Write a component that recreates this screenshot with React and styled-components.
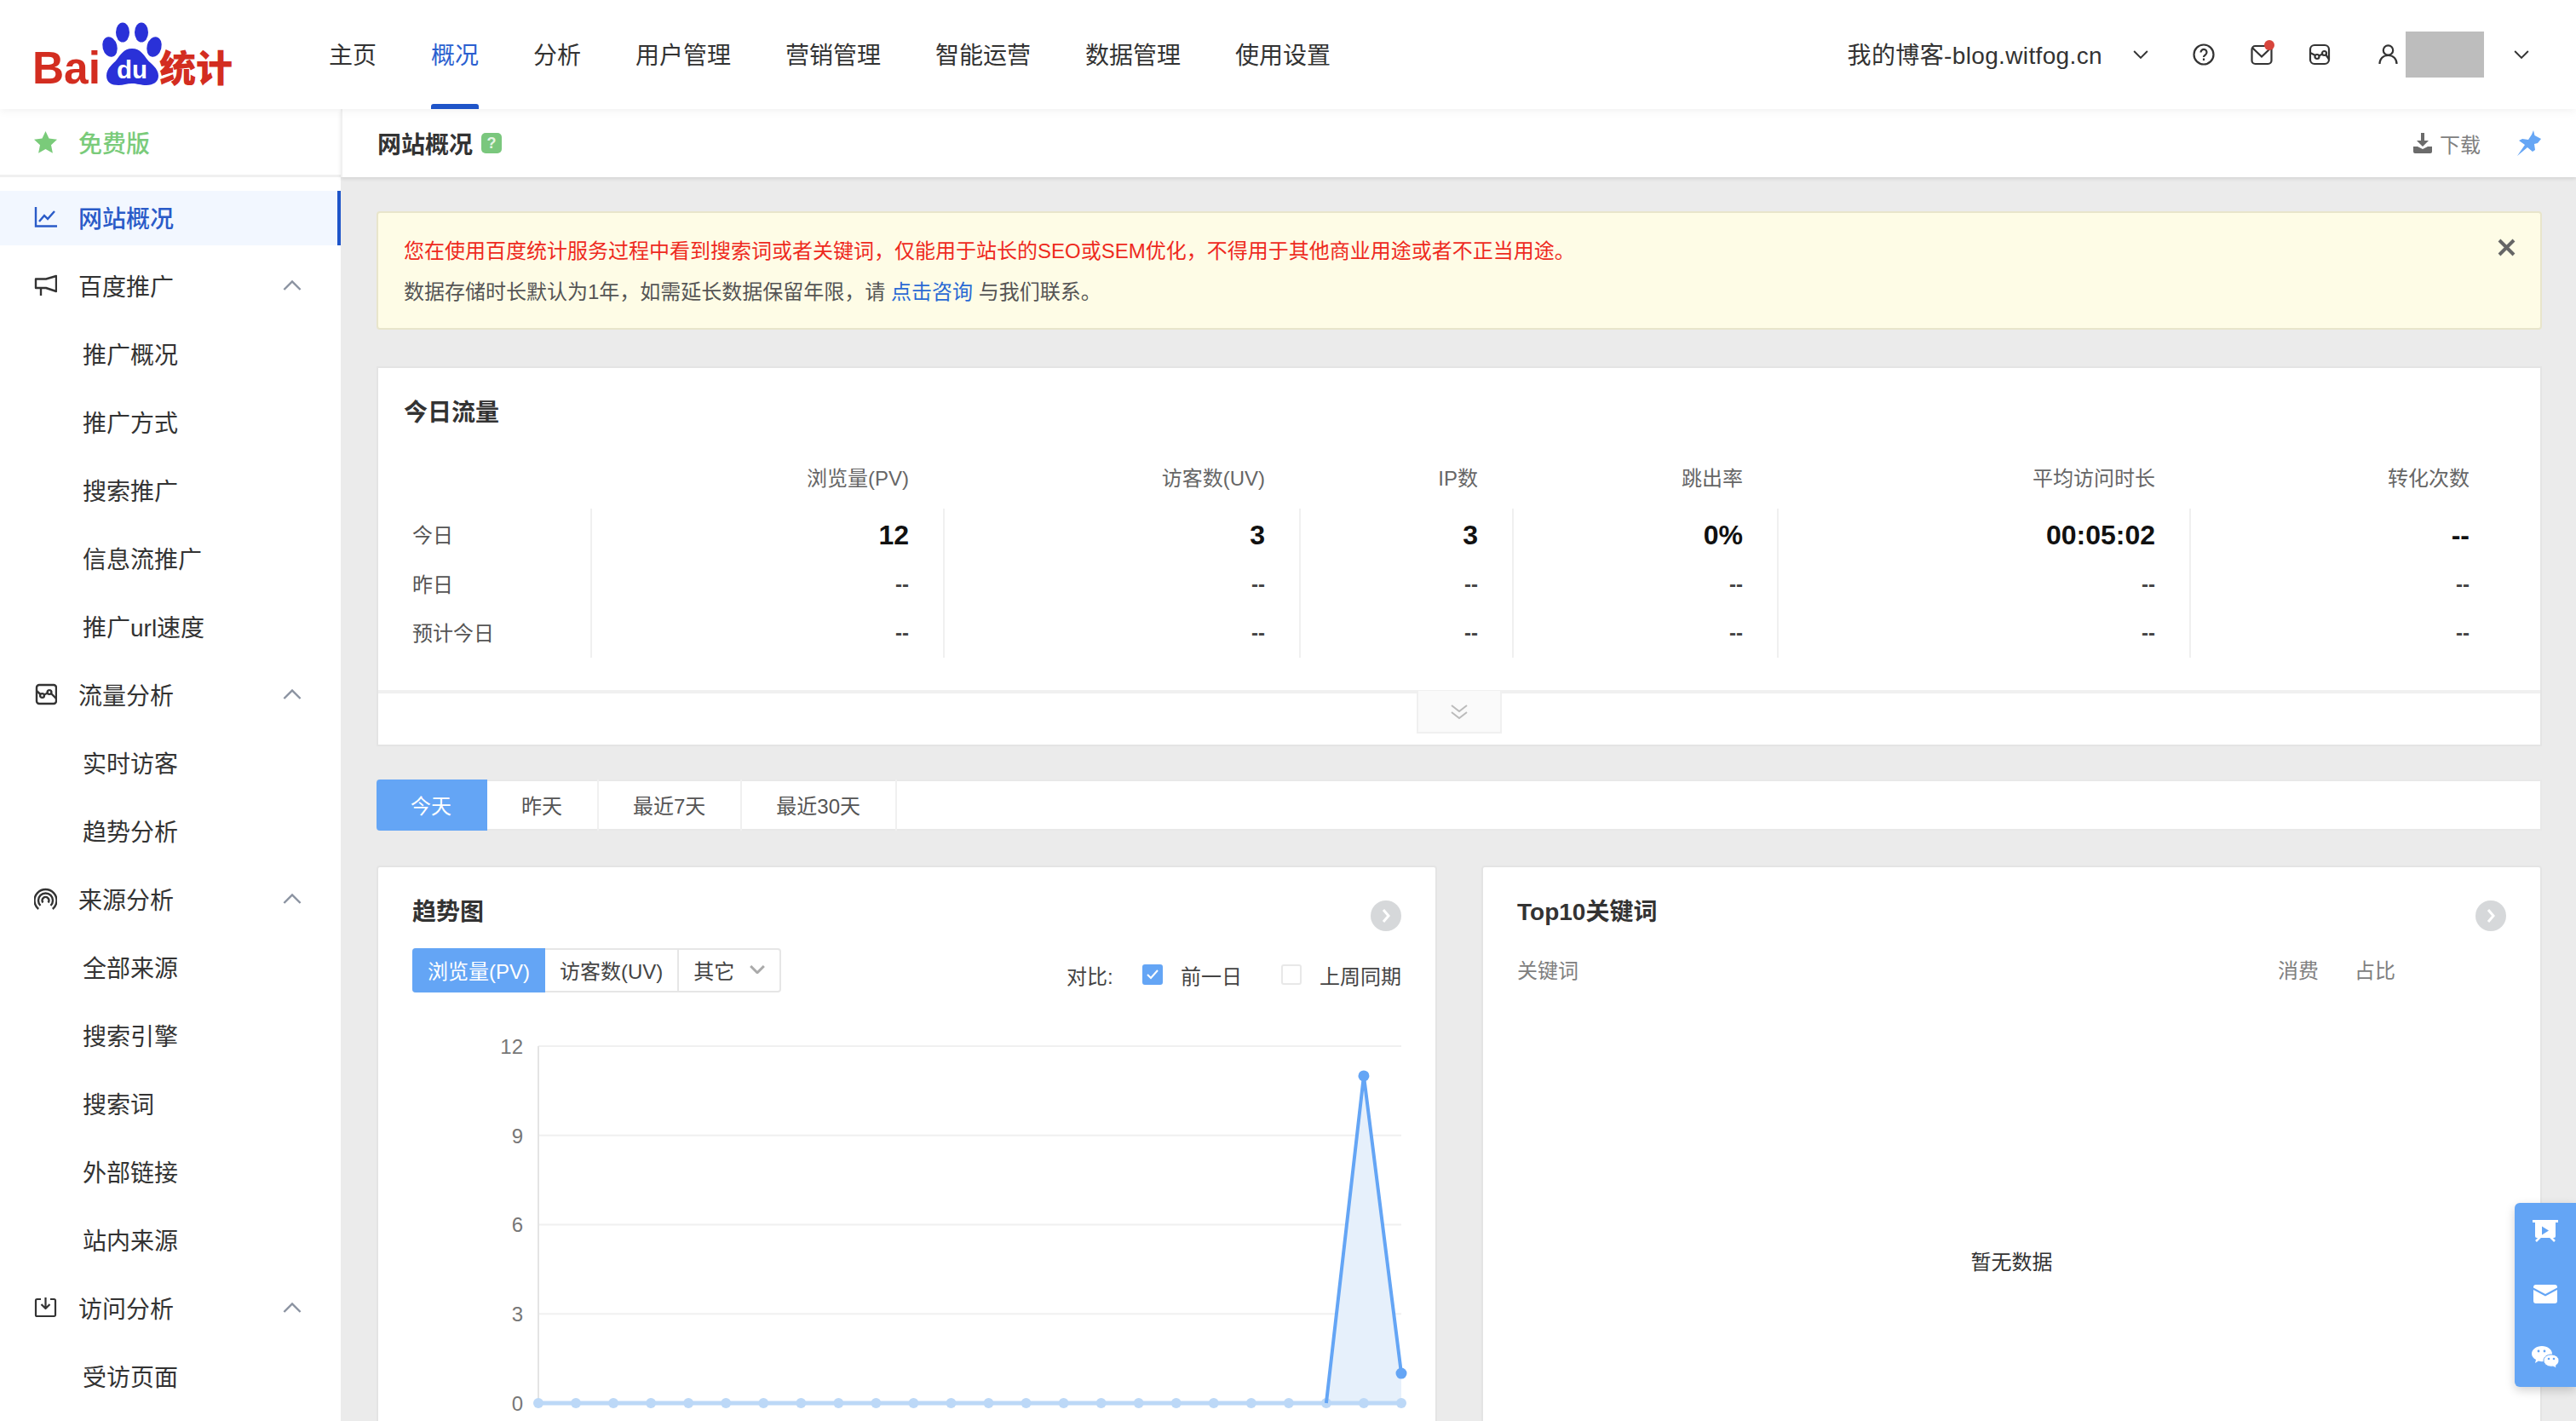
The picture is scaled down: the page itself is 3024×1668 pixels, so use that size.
import React from "react";
import styled, { createGlobalStyle } from "styled-components";

const GlobalStyle = createGlobalStyle`
	html, body {
		margin: 0;
		padding: 0;
		background: #ebebeb;
	}
	body {
		font-family: "Liberation Sans", "Noto Sans CJK SC", sans-serif;
		color: #333;
	}
	* {
		box-sizing: border-box;
	}
`;

// styled [start]
const Page = styled("div")`
	position: relative;
	width: 3024px;
	height: 1668px;
	overflow: hidden;
	display: flex;
	flex-direction: column;
`;

const Header = styled("header")`
	position: relative;
	z-index: 3;
	flex: none;
	display: flex;
	align-items: center;
	height: 128px;
	padding-right: 55px;
	background: #fff;
	box-shadow: 0 2px 10px rgba(0, 0, 0, 0.06);
`;

const LogoBox = styled("div")`
	flex: none;
	width: 386px;
	height: 110px;
	margin-top: -18px;
`;

const Nav = styled("nav")`
	display: flex;
	gap: 64px;
	height: 100%;
`;

const NavItem = styled("a")`
	position: relative;
	display: flex;
	align-items: center;
	padding-bottom: 2px;
	font-size: 28px;
	color: ${(p) => (p.$active ? "#2a5fd0" : "#333")};

	&::after {
		content: "";
		display: ${(p) => (p.$active ? "block" : "none")};
		position: absolute;
		left: 0;
		right: 0;
		bottom: 0;
		height: 6px;
		border-radius: 3px 3px 0 0;
		background: #1f55c9;
	}
`;

const HeaderRight = styled("div")`
	margin-left: auto;
	display: flex;
	align-items: center;
`;

const SiteName = styled("span")`
	margin-right: 36px;
	padding-bottom: 2px;
	font-size: 28px;
	letter-spacing: 0.36px;
	color: #333;
`;

const IconSet = styled("div")`
	display: flex;
	align-items: center;
	gap: 42px;
	margin-left: 52px;
	color: #333;
`;

const MailWrap = styled("span")`
	position: relative;
	display: flex;

	&::after {
		content: "";
		position: absolute;
		top: -4px;
		right: -2px;
		width: 12px;
		height: 12px;
		border-radius: 50%;
		background: #d8453c;
	}
`;

const UserBox = styled("div")`
	display: flex;
	align-items: center;
	gap: 8px;
	margin: 0 35px 0 54px;
	color: #333;
`;

const Avatar = styled("div")`
	width: 92px;
	height: 54px;
	background: #bdbdbd;
`;

const Body = styled("div")`
	flex: 1;
	display: flex;
	min-height: 0;
`;

const Sidebar = styled("aside")`
	flex: none;
	width: 400px;
	background: #fff;
`;

const FreeRow = styled("div")`
	display: flex;
	align-items: center;
	gap: 25px;
	height: 80px;
	padding-left: 40px;
	border-bottom: 3px solid #f0f0f0;
	font-size: 28px;
	font-weight: 500;
	color: #7acb7a;
`;

const ActiveRow = styled("div")`
	display: flex;
	align-items: center;
	gap: 25px;
	height: 64px;
	margin: 16px 0 7px;
	padding: 0 0 2px 40px;
	border-right: 4px solid #1f55c9;
	background: #f2f7ff;
	font-size: 28px;
	font-weight: 500;
	color: #2a5bc8;
`;

const GroupRow = styled("div")`
	display: flex;
	align-items: center;
	gap: 25px;
	height: 80px;
	padding: 0 46px 0 40px;
	font-size: 28px;
	color: #333;
`;

const GroupName = styled("span")`
	flex: 1;
`;

const SubRow = styled("div")`
	display: flex;
	align-items: center;
	height: 80px;
	padding-left: 97px;
	font-size: 28px;
	color: #333;
`;

const Main = styled("main")`
	flex: 1;
	min-width: 0;
	display: flex;
	flex-direction: column;
`;

const TitleBar = styled("div")`
	position: relative;
	z-index: 2;
	flex: none;
	display: flex;
	align-items: center;
	height: 80px;
	padding: 0 41px 0 43px;
	background: #fff;
	border-left: 2px solid #f0f0f0;
	box-shadow: 0 2px 4px rgba(0, 0, 0, 0.1);
`;

const PageTitle = styled("h1")`
	margin: 0 0 0 -2px;
	font-size: 28px;
	font-weight: 700;
	color: #333;
`;

const HelpBadge = styled("span")`
	display: flex;
	align-items: center;
	justify-content: center;
	width: 24px;
	height: 24px;
	margin-left: 10px;
	border-radius: 5px;
	background: #7ac77d;
	color: #e6f5e6;
	font-size: 18px;
	font-weight: 700;
`;

const DownloadBtn = styled("a")`
	display: flex;
	align-items: center;
	gap: 9px;
	margin-left: auto;
	font-size: 24px;
	color: #808080;
`;

const PinBtn = styled("span")`
	display: flex;
	margin-left: 42px;
`;

const Content = styled("div")`
	flex: 1;
	min-height: 0;
	padding: 40px 40px 0 42px;
`;

const Alert = styled("div")`
	position: relative;
	height: 139px;
	padding: 28px 30px 0;
	border: 2px solid #e8e5cb;
	border-radius: 4px;
	background: #fefce6;
	font-size: 24px;
	line-height: 34px;
	color: #555;
`;

const AlertLine = styled("p")`
	margin: 0 0 14px;
	color: ${(p) => (p.$danger ? "#ee2a1e" : "#555")};
`;

const AlertLink = styled("a")`
	color: #2a6ad4;
`;

const AlertClose = styled("span")`
	position: absolute;
	top: 30px;
	right: 29px;
	display: flex;
	color: #666;
`;

const TodayCard = styled("section")`
	height: 446px;
	margin-top: 43px;
	border: 2px solid #e4e4e4;
	background: #fff;
`;

const CardTitle = styled("h2")`
	margin: 0;
	font-size: 28px;
	line-height: 40px;
	font-weight: 700;
	color: #333;
`;

const TodayHead = styled("div")`
	padding: 33px 0 0 30px;
`;

const StatHeadRow = styled("div")`
	display: grid;
	grid-template-columns: 219px 414px 418px 250px 311px 484px 369px;
	margin: 37px 0 0 30px;
	height: 40px;
`;

const StatHeadCell = styled("div")`
	padding-right: 40px;
	text-align: right;
	font-size: 24px;
	line-height: 40px;
	color: #666;
`;

const StatBody = styled("div")`
	display: grid;
	grid-template-columns: 219px 414px 418px 250px 311px 484px 369px;
	grid-template-rows: 62px 54px 59px;
	margin: 15px 0 0 30px;
`;

const RowLabel = styled("div")`
	display: flex;
	align-items: center;
	padding: 0 0 3px 10px;
	font-size: 24px;
	color: #555;
`;

const StatCell = styled("div")`
	display: flex;
	align-items: center;
	justify-content: flex-end;
	padding-right: 40px;
	border-left: 2px solid #f0f0f0;
	font-size: ${(p) => (p.$big ? "32px" : "24px")};
	font-weight: 700;
	color: ${(p) => (p.$big ? "#111" : "#444")};
`;

const ExpandRow = styled("div")`
	display: flex;
	justify-content: center;
	height: 62px;
	margin-top: 38px;
	border-top: 4px solid #f0f0f0;
`;

const ExpandBtn = styled("div")`
	display: flex;
	align-items: center;
	justify-content: center;
	width: 100px;
	height: 50px;
	margin-top: -3px;
	padding-top: 2px;
	border: 2px solid #f0f0f0;
	border-top: 0;
	background: #fafafa;
	color: #bbb;
`;

const TabBar = styled("div")`
	display: flex;
	height: 60px;
	margin-top: 39px;
	border: 2px solid #e8e8e8;
	border-left: 0;
	background: #fff;
`;

const Tab = styled("div")`
	display: flex;
	align-items: center;
	margin: -2px 0 -2px;
	padding: 0 ${(p) => (p.$active ? "40px" : "41px")} 2px 40px;
	border-right: 2px solid ${(p) => (p.$active ? "transparent" : "#f0f0f0")};
	border-radius: ${(p) => (p.$active ? "4px 0 0 4px" : "0")};
	background: ${(p) => (p.$active ? "#64a5f5" : "transparent")};
	font-size: 24px;
	color: ${(p) => (p.$active ? "#fff" : "#555")};
`;

const CardGrid = styled("div")`
	display: grid;
	grid-template-columns: minmax(0, 1fr) minmax(0, 1fr);
	gap: 52px;
	margin-top: 41px;
`;

const PanelCard = styled("section")`
	height: 700px;
	padding: 33px 40px 0 40px;
	border: 2px solid #e4e4e4;
	border-radius: 4px;
	background: #fff;
`;

const PanelHead = styled("div")`
	display: flex;
	justify-content: space-between;
	align-items: flex-start;
`;

const MoreBtn = styled("span")`
	display: flex;
	align-items: center;
	justify-content: center;
	width: 36px;
	height: 36px;
	margin-top: 6px;
	border-radius: 50%;
	background: #d6d8da;
	color: #fff;
`;

const ControlRow = styled("div")`
	display: flex;
	justify-content: space-between;
	align-items: flex-end;
	margin-top: 20px;
`;

const BtnGroup = styled("div")`
	display: flex;
	height: 52px;
	border: 2px solid #e6e6e6;
	border-radius: 4px;
	background: #fff;
`;

const GroupBtn = styled("div")`
	display: flex;
	align-items: center;
	margin: ${(p) => (p.$active ? "-2px 0 -2px -2px" : "0")};
	padding: 0 ${(p) => (p.$active ? "18px" : "17px")} 2px;
	border-right: ${(p) => (p.$active ? "0" : "2px solid #e6e6e6")};
	border-radius: ${(p) => (p.$active ? "4px 0 0 4px" : "0")};
	background: ${(p) => (p.$active ? "#64a5f5" : "transparent")};
	font-size: 24px;
	color: ${(p) => (p.$active ? "#fff" : "#444")};

	&:last-child {
		border-right: 0;
		gap: 18px;
	}
`;

const Compare = styled("div")`
	display: flex;
	align-items: center;
	height: 36px;
	margin-bottom: 3px;
	font-size: 24px;
	color: #444;
`;

const CompareLabel = styled("span")`
	width: 89px;
`;

const CheckBox = styled("span")`
	display: flex;
	align-items: center;
	justify-content: center;
	width: 24px;
	height: 24px;
	margin-right: 21px;
	border: 2px solid ${(p) => (p.$checked ? "#64a5f5" : "#e8e8e8")};
	border-radius: 3px;
	background: ${(p) => (p.$checked ? "#64a5f5" : "#fff")};
	color: #fff;
`;

const CompareText = styled("span")`
	margin-right: 46px;

	&:last-child {
		margin-right: 0;
	}
`;

const ChartSvg = styled("svg")`
	display: block;
	margin: 47px 0 0 86px;
`;

const KeywordHead = styled("div")`
	display: grid;
	grid-template-columns: 1fr 90px 178px;
	margin-top: 29px;
	font-size: 24px;
	line-height: 36px;
	color: #808080;
`;

const EmptyText = styled("div")`
	margin-top: 308px;
	text-align: center;
	font-size: 24px;
	line-height: 32px;
	color: #333;
`;

const FloatBar = styled("div")`
	position: absolute;
	z-index: 5;
	top: 1412px;
	right: 0;
	display: flex;
	flex-direction: column;
	align-items: center;
	justify-content: space-between;
	width: 72px;
	height: 216px;
	padding: 20px 0 22px;
	border-radius: 6px 0 0 6px;
	background: #64a5f5;
	box-shadow: 0 4px 12px rgba(0, 0, 0, 0.18);
`;
// styled [end]

const Chevron = ({ up, size = 18, color = "currentColor", width = 2 }) => (
	<svg width={size} height={size * 0.6} viewBox="0 0 18 11" fill="none" stroke={color} strokeWidth={width}>
		<path d={up ? "M1 10L9 2l8 8" : "M1 1l8 8 8-8"} />
	</svg>
);

const Logo = () => (
	<svg width="300" height="110" viewBox="0 0 300 110">
		<text x="38" y="98" fontFamily="Liberation Sans" fontWeight="700" fontSize="53" fill="#d32d20" textLength="80" lengthAdjust="spacingAndGlyphs">
			Bai
		</text>
		<g fill="#2a31d8">
			<ellipse cx="144" cy="38" rx="8" ry="11.5" />
			<ellipse cx="166" cy="38" rx="8" ry="11.5" />
			<ellipse cx="129" cy="55" rx="8.5" ry="12" transform="rotate(-15 129 55)" />
			<ellipse cx="181" cy="55" rx="8.5" ry="12" transform="rotate(15 181 55)" />
			<path d="M155 57c-10 0-14 8-18 13-4 5-12 10-12 19 0 8 6 11 14 11 6 0 10-2 16-2 6 0 10 2 17 2 8 0 14-4 14-11 0-9-9-14-13-19-4-5-8-13-18-13z" />
		</g>
		<text x="137" y="92" fontFamily="Liberation Sans" fontWeight="700" fontSize="30" fill="#fff" textLength="36" lengthAdjust="spacingAndGlyphs">
			du
		</text>
		<text x="187" y="96" fontFamily="Noto Sans CJK SC" fontWeight="900" fontSize="43" fill="#d32d20">
			统计
		</text>
	</svg>
);

const HelpIcon = () => (
	<svg width="26" height="26" viewBox="0 0 26 26" fill="none" stroke="currentColor" strokeWidth="2.2">
		<circle cx="13" cy="13" r="11.5" />
		<path d="M9.500 10.500a3.500 3.500 0 1 1 5.500 2.800c-1.200.9-2 1.300-2 2.700" />
		<path d="M13 17.500v2.500" />
	</svg>
);

const MailIcon = () => (
	<svg width="26" height="26" viewBox="0 0 26 26" fill="none" stroke="currentColor" strokeWidth="2.2">
		<rect x="1.500" y="3" width="23" height="21" rx="4" />
		<path d="M2 5l11 10.500L24 5" />
	</svg>
);

const WaveBoxIcon = () => (
	<svg width="26" height="26" viewBox="0 0 26 26" fill="none" stroke="currentColor" strokeWidth="2.2">
		<rect x="2" y="2" width="22" height="22" rx="5" />
		<circle cx="10" cy="15.500" r="2.500" />
		<circle cx="18.500" cy="11.500" r="2.500" />
		<path d="M2 11l6 3M12.200 14.500l4-2M20.500 13.500l3.500 5" />
	</svg>
);

const UserIcon = () => (
	<svg width="26" height="26" viewBox="0 0 26 26" fill="none" stroke="currentColor" strokeWidth="2.200">
		<circle cx="13.500" cy="8" r="5.700" />
		<path d="M3.500 24c0-6 4-10 10-10s10 4 10 10" />
	</svg>
);

const StarIcon = () => (
	<svg width="27" height="26" viewBox="0 0 27 26" fill="currentColor">
		<path d="M13.500 0l4 8.600 9.500 1.200-7 6.500 1.900 9.400-8.400-4.700-8.400 4.700L7 16.300 0 9.800l9.500-1.200z" />
	</svg>
);

const TrendIcon = () => (
	<svg width="27" height="26" viewBox="0 0 27 26" fill="none" stroke="currentColor" strokeWidth="2.4">
		<path d="M2 1v22.500h25" />
		<path d="M6 18l6-7 4 4 8-9" />
	</svg>
);

const SpeakerIcon = () => (
	<svg width="27" height="26" viewBox="10 12 27 26" fill="none" stroke="currentColor" strokeWidth="2.400" strokeLinejoin="round">
		<path d="M12 17.500H24L36 14V32L24 28H12Z" />
		<path d="M18 28V37" />
	</svg>
);

const ImageIcon = () => (
	<svg width="27" height="26" viewBox="10 13 27 26" fill="none" stroke="currentColor" strokeWidth="2.400">
		<rect x="13" y="15" width="23" height="22" rx="3" />
		<circle cx="19.500" cy="27.500" r="2.400" />
		<circle cx="28" cy="23.500" r="2.400" />
		<path d="M13 22l4.500 4M21.800 26.500l4-2M30 25l6 6" />
	</svg>
);

const SignalIcon = () => (
	<svg width="27" height="26" viewBox="10 13 27 26" fill="none" stroke="currentColor" strokeWidth="2.400">
		<path d="M15.200 38A13 13 0 1 1 31.800 38" />
		<path d="M17.500 34A8.500 8.500 0 1 1 29.500 34" />
		<path d="M20.400 30.500A4 4 0 1 1 26.600 30.500" />
	</svg>
);

const SaveIcon = () => (
	<svg width="27" height="26" viewBox="0 0 27 26" fill="none" stroke="currentColor" strokeWidth="2.200" strokeLinejoin="round">
		<path d="M8 3H3.500a1.500 1.500 0 0 0-1.500 1.500v17a1.500 1.500 0 0 0 1.500 1.500h20a1.500 1.500 0 0 0 1.500-1.500v-17a1.500 1.500 0 0 0-1.500-1.500H19" />
		<path d="M13.500 1v12M8.500 9l5 5 5-5" />
	</svg>
);

const DownloadIcon = () => (
	<svg width="22" height="24" viewBox="0 0 22 24" fill="#6b6b6b">
		<path d="M9 0h4v9h5l-7 7-7-7h5z" />
		<path d="M0 16h5l6 3 6-3h5v6a2 2 0 0 1-2 2H2a2 2 0 0 1-2-2z" />
	</svg>
);

const PinIcon = () => (
	<svg width="29" height="30" viewBox="0 0 29 30" fill="#66a6f5">
		<path d="M20 0l1.500 6 7.500 4-4 5-4 1 1 7-3 2-6-5L1 30l9-13-7-5 4-2 7 1 4-6z" />
	</svg>
);

const CloseIcon = () => (
	<svg width="21" height="21" viewBox="0 0 21 21" fill="none" stroke="currentColor" strokeWidth="4">
		<path d="M2 2l17 17M19 2L2 19" />
	</svg>
);

const DoubleDown = () => (
	<svg width="22" height="20" viewBox="0 0 22 20" fill="none" stroke="currentColor" strokeWidth="2">
		<path d="M2 2l9 7 9-7M2 10l9 7 9-7" />
	</svg>
);

const RightArrow = () => (
	<svg width="10" height="18" viewBox="0 0 10 18" fill="none" stroke="currentColor" strokeWidth="3">
		<path d="M2 2l6 7-6 7" />
	</svg>
);

const SmallCheck = () => (
	<svg width="14" height="12" viewBox="0 0 14 12" fill="none" stroke="currentColor" strokeWidth="2">
		<path d="M1 6l4 4 8-9" />
	</svg>
);

const ScreenIcon = () => (
	<svg width="30" height="26" viewBox="0 0 30 26" fill="#fff">
		<rect x="0" y="0" width="30" height="3" />
		<path d="M3 3h24v16a2 2 0 0 1-2 2H5a2 2 0 0 1-2-2z" />
		<path d="M11 7.500l8 5-8 5z" fill="#64a5f5" />
		<path d="M9 20l-5 5M21 20l5 5" stroke="#fff" strokeWidth="2.500" />
	</svg>
);

const EnvelopeIcon = () => (
	<svg width="28" height="22" viewBox="0 0 28 22" fill="#fff">
		<path d="M3 0h22a3 3 0 0 1 3 3v.5L14 11 0 3.500V3a3 3 0 0 1 3-3z" />
		<path d="M0 6l14 7.500L28 6v13a3 3 0 0 1-3 3H3a3 3 0 0 1-3-3z" />
	</svg>
);

const WechatIcon = () => (
	<svg width="32" height="26" viewBox="0 0 32 26" fill="#fff">
		<path d="M12 0c6.600 0 12 4 12 9 0 1-.2 1.600-.5 2-4.500-.5-9 2.500-9 7l-2.500.2c-1.500 0-2.800-.2-4-.7L4 20l1-4C2 14.500 0 12 0 9c0-5 5.400-9 12-9z" />
		<circle cx="8" cy="6" r="1.400" fill="#64a5f5" />
		<circle cx="15" cy="6" r="1.400" fill="#64a5f5" />
		<path d="M23 10c5 0 9 3 9 7 0 2.500-1.500 4.500-3.500 5.800L29 26l-4-2c-.7.200-1.300.2-2 .2-5 0-9-3.200-9-7.200s4-7 9-7z" stroke="#64a5f5" strokeWidth="1" />
		<circle cx="20" cy="15" r="1.300" fill="#64a5f5" />
		<circle cx="26" cy="15" r="1.300" fill="#64a5f5" />
	</svg>
);

const NavList = ["主页", "概况", "分析", "用户管理", "营销管理", "智能运营", "数据管理", "使用设置"];

const SideGroups = [
	{ name: "百度推广", Icon: SpeakerIcon, items: ["推广概况", "推广方式", "搜索推广", "信息流推广", "推广url速度"] },
	{ name: "流量分析", Icon: ImageIcon, items: ["实时访客", "趋势分析"] },
	{ name: "来源分析", Icon: SignalIcon, items: ["全部来源", "搜索引擎", "搜索词", "外部链接", "站内来源"] },
	{ name: "访问分析", Icon: SaveIcon, items: ["受访页面"] },
];

const StatHeads = ["", "浏览量(PV)", "访客数(UV)", "IP数", "跳出率", "平均访问时长", "转化次数"];

const StatRows = [
	{ label: "今日", big: true, values: ["12", "3", "3", "0%", "00:05:02", "--"] },
	{ label: "昨日", values: ["--", "--", "--", "--", "--", "--"] },
	{ label: "预计今日", values: ["--", "--", "--", "--", "--", "--"] },
];

const TabList = ["今天", "昨天", "最近7天", "最近30天"];

// chart coordinates, svg origin is at x=570 y=1210 of the page
const plotLeft = 62;
const plotRight = 1075;
const plotBottom = 435;
const unit = 34.92;
const stepX = (plotRight - plotLeft) / 23;
const xAt = (i) => plotLeft + i * stepX;
const yAt = (v) => plotBottom - v * unit;
const today = Array.from({ length: 24 }, (_, i) => (i === 22 ? 11 : i === 23 ? 1 : 0));
const areaPoints = `${xAt(21)},${plotBottom} ${xAt(22)},${yAt(11)} ${xAt(23)},${yAt(1)} ${xAt(23)},${plotBottom}`;

const TrendChart = () => (
	<ChartSvg width="1090" height="458" viewBox="0 0 1090 458">
		{[12, 9, 6, 3].map((v) => (
			<line key={v} x1={plotLeft} x2={plotRight} y1={yAt(v)} y2={yAt(v)} stroke="#f0f0f0" strokeWidth="2" />
		))}
		<line x1={plotLeft} x2={plotLeft} y1={yAt(12)} y2={plotBottom} stroke="#e4e4e4" strokeWidth="2" />
		{[12, 9, 6, 3, 0].map((v) => (
			<text key={v} x="44" y={yAt(v) + 9} textAnchor="end" fontFamily="Liberation Sans" fontSize="24" fill="#777">
				{v}
			</text>
		))}
		<polygon points={areaPoints} fill="#e6f0fb" />
		<line x1={plotLeft} x2={plotRight} y1={plotBottom} y2={plotBottom} stroke="#bcd8f7" strokeWidth="5" />
		{today.map((_, i) => (
			<circle key={i} cx={xAt(i)} cy={plotBottom} r="6" fill="#bcd8f7" />
		))}
		<polyline points={`${xAt(21)},${plotBottom} ${xAt(22)},${yAt(11)} ${xAt(23)},${yAt(1)}`} fill="none" stroke="#64a5f5" strokeWidth="4" />
		<circle cx={xAt(22)} cy={yAt(11)} r="6.500" fill="#64a5f5" />
		<circle cx={xAt(23)} cy={yAt(1)} r="6.500" fill="#64a5f5" />
	</ChartSvg>
);

function App() {
	return (
		<Page>
			<GlobalStyle />
			<Header>
				<LogoBox>
					<Logo />
				</LogoBox>
				<Nav>
					{NavList.map((item) => (
						<NavItem key={item} $active={item === "概况"}>
							{item}
						</NavItem>
					))}
				</Nav>
				<HeaderRight>
					<SiteName>我的博客-blog.witfog.cn</SiteName>
					<Chevron color="#333" />
					<IconSet>
						<HelpIcon />
						<MailWrap>
							<MailIcon />
						</MailWrap>
						<WaveBoxIcon />
					</IconSet>
					<UserBox>
						<UserIcon />
						<Avatar />
					</UserBox>
					<Chevron color="#333" />
				</HeaderRight>
			</Header>

			<Body>
				<Sidebar>
					<FreeRow>
						<StarIcon />
						免费版
					</FreeRow>
					<ActiveRow>
						<TrendIcon />
						网站概况
					</ActiveRow>
					{SideGroups.map((group) => (
						<div key={group.name}>
							<GroupRow>
								<group.Icon />
								<GroupName>{group.name}</GroupName>
								<Chevron up size={22} color="#8a92a0" />
							</GroupRow>
							{group.items.map((item) => (
								<SubRow key={item}>{item}</SubRow>
							))}
						</div>
					))}
				</Sidebar>

				<Main>
					<TitleBar>
						<PageTitle>网站概况</PageTitle>
						<HelpBadge>?</HelpBadge>
						<DownloadBtn>
							<DownloadIcon />
							下载
						</DownloadBtn>
						<PinBtn>
							<PinIcon />
						</PinBtn>
					</TitleBar>

					<Content>
						<Alert>
							<AlertLine $danger>
								您在使用百度统计服务过程中看到搜索词或者关键词，仅能用于站长的SEO或SEM优化，不得用于其他商业用途或者不正当用途。
							</AlertLine>
							<AlertLine>
								数据存储时长默认为1年，如需延长数据保留年限，请 <AlertLink>点击咨询</AlertLink> 与我们联系。
							</AlertLine>
							<AlertClose>
								<CloseIcon />
							</AlertClose>
						</Alert>

						<TodayCard>
							<TodayHead>
								<CardTitle>今日流量</CardTitle>
							</TodayHead>
							<StatHeadRow>
								{StatHeads.map((head, index) => (
									<StatHeadCell key={index}>{head}</StatHeadCell>
								))}
							</StatHeadRow>
							<StatBody>
								{StatRows.map((row) => (
									<React.Fragment key={row.label}>
										<RowLabel>{row.label}</RowLabel>
										{row.values.map((value, index) => (
											<StatCell key={index} $big={row.big}>
												{value}
											</StatCell>
										))}
									</React.Fragment>
								))}
							</StatBody>
							<ExpandRow>
								<ExpandBtn>
									<DoubleDown />
								</ExpandBtn>
							</ExpandRow>
						</TodayCard>

						<TabBar>
							{TabList.map((tab, index) => (
								<Tab key={tab} $active={index === 0}>
									{tab}
								</Tab>
							))}
						</TabBar>

						<CardGrid>
							<PanelCard>
								<PanelHead>
									<CardTitle>趋势图</CardTitle>
									<MoreBtn>
										<RightArrow />
									</MoreBtn>
								</PanelHead>
								<ControlRow>
									<BtnGroup>
										<GroupBtn $active>浏览量(PV)</GroupBtn>
										<GroupBtn>访客数(UV)</GroupBtn>
										<GroupBtn>
											其它
											<Chevron size={18} color="#aaa" width={3} />
										</GroupBtn>
									</BtnGroup>
									<Compare>
										<CompareLabel>对比:</CompareLabel>
										<CheckBox $checked>
											<SmallCheck />
										</CheckBox>
										<CompareText>前一日</CompareText>
										<CheckBox />
										<CompareText>上周同期</CompareText>
									</Compare>
								</ControlRow>
								<TrendChart />
							</PanelCard>

							<PanelCard>
								<PanelHead>
									<CardTitle>Top10关键词</CardTitle>
									<MoreBtn>
										<RightArrow />
									</MoreBtn>
								</PanelHead>
								<KeywordHead>
									<span>关键词</span>
									<span>消费</span>
									<span>占比</span>
								</KeywordHead>
								<EmptyText>暂无数据</EmptyText>
							</PanelCard>
						</CardGrid>
					</Content>
				</Main>
			</Body>

			<FloatBar>
				<ScreenIcon />
				<EnvelopeIcon />
				<WechatIcon />
			</FloatBar>
		</Page>
	);
}

export default App;
